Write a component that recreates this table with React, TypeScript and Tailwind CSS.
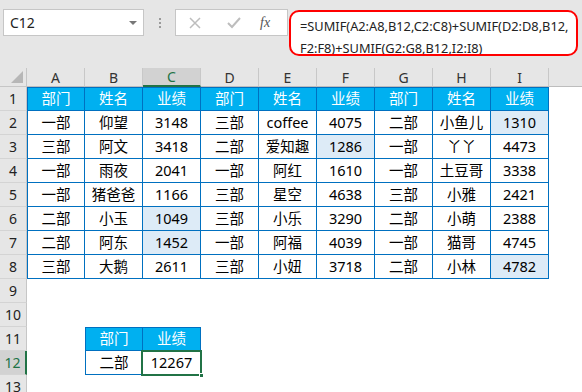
const cols = ["A", "B", "C", "D", "E", "F", "G", "H", "I"];

const data: string[][] = [
  ["部门", "姓名", "业绩", "部门", "姓名", "业绩", "部门", "姓名", "业绩"],
  ["一部", "仰望", "3148", "三部", "coffee", "4075", "二部", "小鱼儿", "1310"],
  ["三部", "阿文", "3418", "二部", "爱知趣", "1286", "一部", "丫丫", "4473"],
  ["一部", "雨夜", "2041", "一部", "阿红", "1610", "一部", "土豆哥", "3338"],
  ["一部", "猪爸爸", "1166", "三部", "星空", "4638", "三部", "小雅", "2421"],
  ["二部", "小玉", "1049", "三部", "小乐", "3290", "二部", "小萌", "2388"],
  ["二部", "阿东", "1452", "一部", "阿福", "4039", "一部", "猫哥", "4745"],
  ["三部", "大鹅", "2611", "三部", "小妞", "3718", "二部", "小林", "4782"],
];

// highlighted cells, "row-col"
const marked = new Set(["1-8", "2-5", "5-2", "6-2", "7-8"]);

function RowHead({ n, active }: { n: number; active?: boolean }) {
  return (
    <div
      className={
        "h-[24px] flex items-center justify-center text-[14px] border-b border-[#d4d4d4] " +
        (active
          ? "bg-[#d2d2d2] text-[#217346] border-r-2 border-r-[#217346]"
          : "bg-[#e6e6e6] text-[#222] border-r border-r-[#c6c6c6]")
      }
    >
      {n}
    </div>
  );
}

export default function App() {
  return (
    <div className="w-[582px] h-[392px] overflow-hidden bg-white font-['Noto_Sans','Noto_Sans_CJK_SC',sans-serif]">
      {/* formula bar */}
      <div className="h-[68px] bg-[#e6e6e6] flex items-start pt-[9px] pl-[3px]">
        <div className="w-[141px] h-[27px] bg-white border border-[#c6c6c6] flex items-center justify-between pl-[6px] pr-[6px]">
          <span className="text-[14px] text-[#222]">C12</span>
          <span className="w-0 h-0 border-l-[4px] border-r-[4px] border-t-[4px] border-l-transparent border-r-transparent border-t-[#777]" />
        </div>
        <div className="w-[31px] h-[27px] flex flex-col items-center justify-center gap-[2px]">
          <span className="w-[2px] h-[2px] bg-[#9a9a9a]" />
          <span className="w-[2px] h-[2px] bg-[#9a9a9a]" />
          <span className="w-[2px] h-[2px] bg-[#9a9a9a]" />
        </div>
        <div className="w-[113px] h-[27px] bg-white border border-[#c6c6c6] flex items-center">
          <svg width="14" height="14" viewBox="0 0 14 14" className="ml-[12px]">
            <path d="M2 2 L12 12 M12 2 L2 12" stroke="#bdbdbd" strokeWidth="1.5" fill="none" />
          </svg>
          <svg width="16" height="14" viewBox="0 0 16 14" className="ml-[24px]">
            <path d="M2 7 L6 11 L14 2" stroke="#bdbdbd" strokeWidth="2" fill="none" />
          </svg>
          <span className="ml-[18px] text-[14px] italic text-[#555] font-['Liberation_Serif',serif]">fx</span>
        </div>
        <div className="ml-[1px] mt-[1px] w-[289px] h-[46px] bg-white border-2 border-[#ff0000] rounded-[10px] pl-[9px] pt-[3px] text-[12.8px] leading-[22px] text-[#222] whitespace-nowrap overflow-hidden">
          <div>=SUMIF(A2:A8,B12,C2:C8)+SUMIF(D2:D8,B12,</div>
          <div>F2:F8)+SUMIF(G2:G8,B12,I2:I8)</div>
        </div>
      </div>

      {/* sheet */}
      <div className="grid grid-cols-[27px_repeat(9,58px)_1fr]">
        {/* column header row */}
        <div className="h-[19px] bg-[#e6e6e6] border-r border-b border-[#c6c6c6] flex items-end justify-end pr-[3px] pb-[3px]">
          <svg width="12" height="12" viewBox="0 0 12 12">
            <path d="M12 0 L12 12 L0 12 Z" fill="#b7b7b7" />
          </svg>
        </div>
        {cols.map((c) => (
          <div
            key={c}
            className={
              "h-[19px] flex items-center justify-center text-[14px] border-r border-r-[#c8c8c8] " +
              (c === "C"
                ? "bg-[#d2d2d2] text-[#217346] border-b-2 border-b-[#217346]"
                : "bg-[#e6e6e6] text-[#333] border-b border-b-[#bdbdbd]")
            }
          >
            {c}
          </div>
        ))}
        <div className="h-[19px] bg-[#e6e6e6] border-b border-[#bdbdbd]" />

        {/* data rows */}
        {data.map((row, r) => (
          <div key={r} className="contents">
            <RowHead n={r + 1} />
            {row.map((v, c) => (
              <div
                key={c}
                className={
                  "h-[24px] flex items-center justify-center text-[14.5px] border-r border-b border-[#0070c0] " +
                  (c === 0 ? "border-l " : "") +
                  (r === 0
                    ? "border-t bg-[#00b0f0] text-white"
                    : marked.has(r + "-" + c)
                      ? "bg-[#ddebf7] text-black"
                      : "bg-white text-black")
                }
              >
                {v}
              </div>
            ))}
            <div className="h-[24px]" />
          </div>
        ))}

        {/* row 9, 10 */}
        {[9, 10].map((n) => (
          <div key={n} className="contents">
            <RowHead n={n} />
            <div className="col-span-10 h-[24px]" />
          </div>
        ))}

        {/* row 11 */}
        <RowHead n={11} />
        <div className="h-[24px]" />
        <div className="h-[24px] flex items-center justify-center text-[14.5px] bg-[#00b0f0] text-white border border-[#0070c0]">
          部门
        </div>
        <div className="h-[24px] flex items-center justify-center text-[14.5px] bg-[#00b0f0] text-white border-t border-r border-b border-[#0070c0]">
          业绩
        </div>
        <div className="col-span-7 h-[24px]" />

        {/* row 12 */}
        <RowHead n={12} active />
        <div className="h-[24px]" />
        <div className="h-[24px] flex items-center justify-center text-[14.5px] text-black border-l border-r border-b border-[#0070c0]">
          二部
        </div>
        <div className="relative h-[24px] flex items-center justify-center text-[14.5px] text-black border-r border-b border-[#0070c0]">
          12267
          <div className="absolute -left-[2px] -top-[1px] -right-[2px] -bottom-[2px] border-2 border-[#217346]" />
          <div className="absolute -right-[4px] -bottom-[4px] w-[5px] h-[5px] bg-[#217346] border border-white" />
        </div>
        <div className="col-span-7 h-[24px]" />

        {/* row 13 */}
        <RowHead n={13} />
        <div className="col-span-10 h-[24px]" />
      </div>
    </div>
  );
}
